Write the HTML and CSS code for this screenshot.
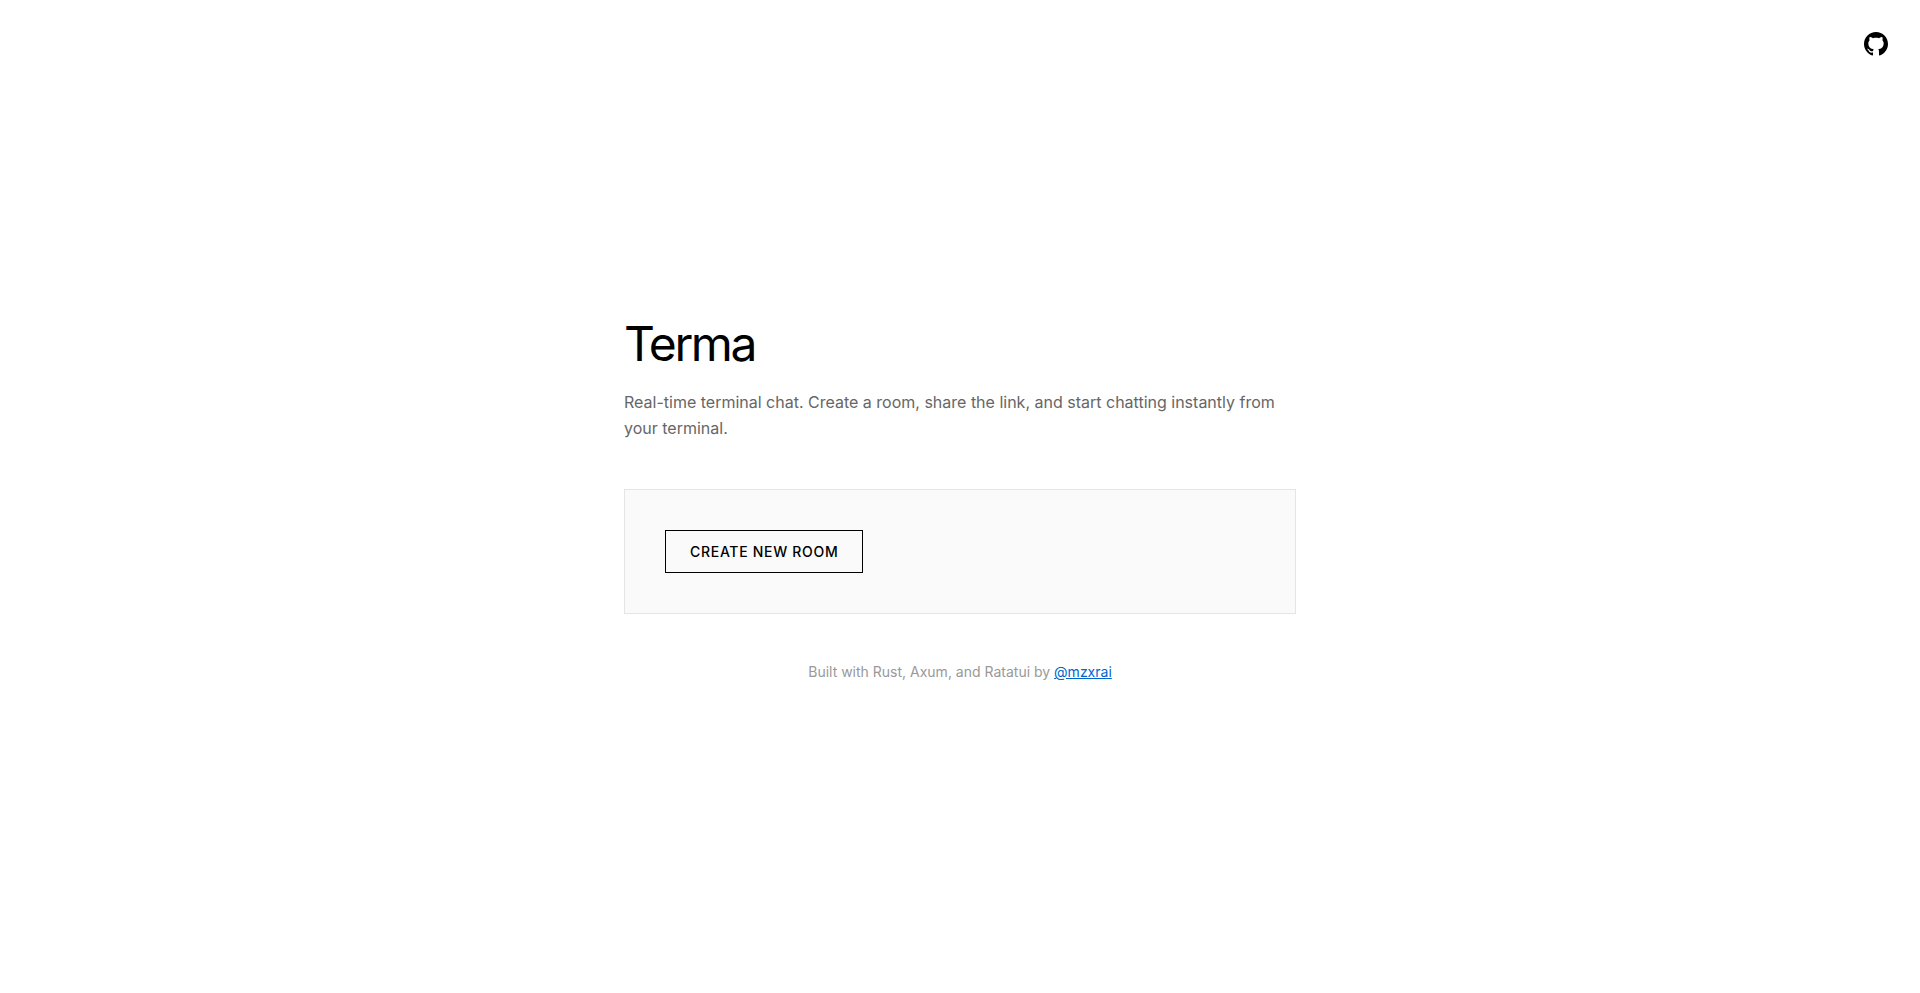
FILE: index.html
```html
<!DOCTYPE html>
<html lang="en">
<head>
    <meta charset="UTF-8">
    <meta name="viewport" content="width=device-width, initial-scale=1.0">
    <title>Terma</title>
    <link rel="stylesheet" href="styles.css">
</head>
<body>
    <a class="github-link" href="https://github.com/mzxrai/terma" aria-label="View on GitHub">
        <svg width="24" height="24" viewBox="0 0 24 24" fill="currentColor" aria-hidden="true">
            <path d="M12 0c-6.626 0-12 5.373-12 12 0 5.302 3.438 9.8 8.207 11.387.599.111.793-.261.793-.577v-2.234c-3.338.726-4.033-1.416-4.033-1.416-.546-1.387-1.333-1.756-1.333-1.756-1.089-.745.083-.729.083-.729 1.205.084 1.839 1.237 1.839 1.237 1.07 1.834 2.807 1.304 3.492.997.107-.775.418-1.305.762-1.604-2.665-.305-5.467-1.334-5.467-5.931 0-1.311.469-2.381 1.236-3.221-.124-.303-.535-1.524.117-3.176 0 0 1.008-.322 3.301 1.23.957-.266 1.983-.399 3.003-.404 1.02.005 2.047.138 3.006.404 2.291-1.552 3.297-1.23 3.297-1.23.653 1.653.242 2.874.118 3.176.77.84 1.235 1.911 1.235 3.221 0 4.609-2.807 5.624-5.479 5.921.43.372.823 1.102.823 2.222v3.293c0 .319.192.694.801.576 4.765-1.589 8.199-6.086 8.199-11.386 0-6.627-5.373-12-12-12z"/>
        </svg>
    </a>

    <main class="container">
        <h1>Terma</h1>
        <p class="subtitle">Real-time terminal chat. Create a room, share the link, and start chatting instantly from your terminal.</p>

        <div class="action-area">
            <button type="button" class="create-btn">Create New Room</button>
        </div>

        <footer>
            Built with Rust, Axum, and Ratatui by <a href="https://x.com/mzxrai">@mzxrai</a>
        </footer>
    </main>
</body>
</html>
```

FILE: styles.css
```css
* {
    margin: 0;
    padding: 0;
    box-sizing: border-box;
}

body {
    font-family: 'Inter', sans-serif;
    font-size: 16px;
    line-height: 26px;
    color: #000;
    background: #fff;
    min-height: 100vh;
    display: flex;
    align-items: center;
    justify-content: center;
}

.github-link {
    position: absolute;
    top: 32px;
    right: 32px;
    color: #000;
}

.github-link svg {
    display: block;
}

.container {
    width: 100%;
    max-width: 720px;
    padding: 24px;
}

h1 {
    font-size: 48px;
    font-weight: 400;
    line-height: 66px;
    letter-spacing: -0.05em;
    margin-bottom: 12px;
}

.subtitle {
    color: #666;
    margin-bottom: 48px;
}

.action-area {
    display: flex;
    padding: 40px;
    background: #fafafa;
    border: 1px solid #e5e5e5;
}

.create-btn {
    padding: 12px 24px;
    font-family: inherit;
    font-size: 14px;
    font-weight: 500;
    letter-spacing: 0.05em;
    text-transform: uppercase;
    color: #000;
    background: transparent;
    border: 1px solid #000;
    cursor: pointer;
}

.create-btn:hover {
    color: #fff;
    background: #000;
}

footer {
    margin-top: 48px;
    font-size: 14px;
    line-height: 20px;
    text-align: center;
    color: #999;
}

footer a {
    color: #0066cc;
}
```
